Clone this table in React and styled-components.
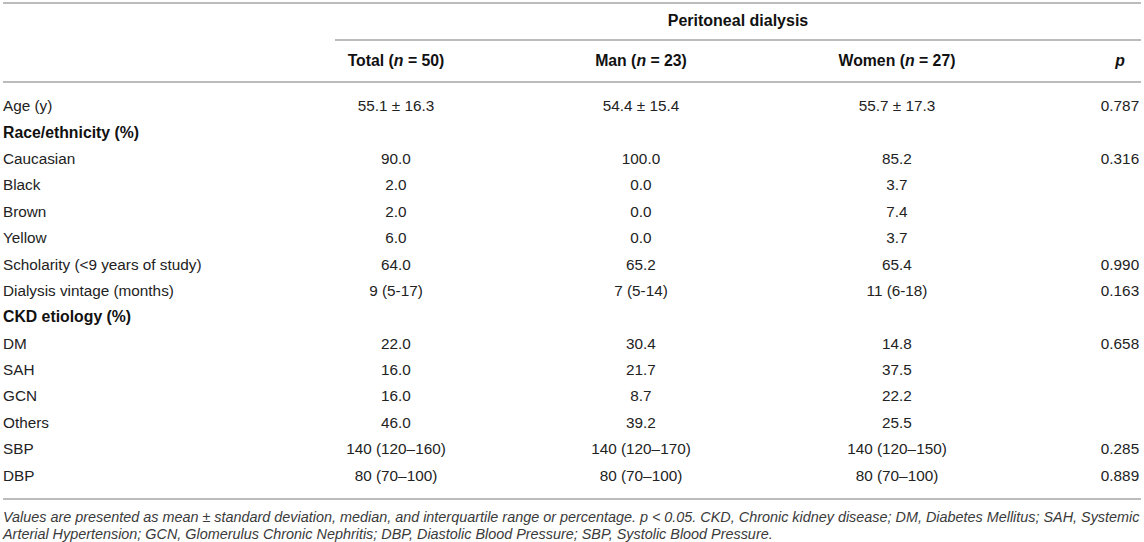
import React from "react";
import styled, { createGlobalStyle } from "styled-components";

const GlobalStyle = createGlobalStyle`
  html, body { margin: 0; padding: 0; background: #ffffff; }
  body {
    font-family: "Liberation Sans", Arial, Helvetica, sans-serif;
    color: #222222;
  }
`;

const COLS = "332px 122px 368px 144px 172px";
const RULE = "2px solid #bcbcbc";

const Page = styled.div`
  width: 1138px;
  padding: 2px 3px 0 3px;
`;

const Table = styled.div`
  border-top: ${RULE};
  border-bottom: ${RULE};
`;

const Row = styled.div`
  display: grid;
  grid-template-columns: ${COLS};
  align-items: center;
  height: ${(p) => p.$h || 26.4}px;
  border-bottom: ${(p) => (p.$rule ? RULE : "none")};
`;

const SpanCell = styled.div`
  grid-column: 2 / -1;
  height: 100%;
  display: flex;
  align-items: center;
  justify-content: center;
  border-bottom: ${RULE};
  font-weight: 700;
  font-size: 16px;
  color: #111;
`;

const Cell = styled.div`
  font-size: ${(p) => (p.$bold ? 15.8 : 15.3)}px;
  white-space: nowrap;
  text-align: ${(p) => (p.$first ? "left" : "center")};
  font-weight: ${(p) => (p.$bold ? 700 : 400)};
  color: ${(p) => (p.$bold ? "#111" : "#222")};
  ${(p) =>
    p.$p &&
    `
    justify-self: end;
    width: 42px;
  `}
`;

const Body = styled.div`
  padding: 10px 0 9px 0;
`;

const Footnote = styled.p`
  margin: 0;
  padding-top: 9px;
  font-size: 14.4px;
  line-height: 17px;
  font-style: italic;
  color: #3a3a3a;
  white-space: nowrap;
`;

const rows = [
  { label: "Age (y)", v: ["55.1 ± 16.3", "54.4 ± 15.4", "55.7 ± 17.3", "0.787"] },
  { label: "Race/ethnicity (%)", bold: true, v: ["", "", "", ""] },
  { label: "Caucasian", v: ["90.0", "100.0", "85.2", "0.316"] },
  { label: "Black", v: ["2.0", "0.0", "3.7", ""] },
  { label: "Brown", v: ["2.0", "0.0", "7.4", ""] },
  { label: "Yellow", v: ["6.0", "0.0", "3.7", ""] },
  { label: "Scholarity (<9 years of study)", v: ["64.0", "65.2", "65.4", "0.990"] },
  { label: "Dialysis vintage (months)", v: ["9 (5-17)", "7 (5-14)", "11 (6-18)", "0.163"] },
  { label: "CKD etiology (%)", bold: true, v: ["", "", "", ""] },
  { label: "DM", v: ["22.0", "30.4", "14.8", "0.658"] },
  { label: "SAH", v: ["16.0", "21.7", "37.5", ""] },
  { label: "GCN", v: ["16.0", "8.7", "22.2", ""] },
  { label: "Others", v: ["46.0", "39.2", "25.5", ""] },
  { label: "SBP", v: ["140 (120–160)", "140 (120–170)", "140 (120–150)", "0.285"] },
  { label: "DBP", v: ["80 (70–100)", "80 (70–100)", "80 (70–100)", "0.889"] },
];

export default function App() {
  return (
    <Page>
      <GlobalStyle />
      <Table>
        <Row $h={36}>
          <div />
          <SpanCell>Peritoneal dialysis</SpanCell>
        </Row>
        <Row $h={41} $rule>
          <div />
          <Cell $bold>
            Total (<i>n</i> = 50)
          </Cell>
          <Cell $bold>
            Man (<i>n</i> = 23)
          </Cell>
          <Cell $bold>
            Women (<i>n</i> = 27)
          </Cell>
          <Cell $bold $p>
            <i>p</i>
          </Cell>
        </Row>
        <Body>
          {rows.map((r) => (
            <Row key={r.label}>
              <Cell $first $bold={r.bold}>
                {r.label}
              </Cell>
              <Cell>{r.v[0]}</Cell>
              <Cell>{r.v[1]}</Cell>
              <Cell>{r.v[2]}</Cell>
              <Cell $p>{r.v[3]}</Cell>
            </Row>
          ))}
        </Body>
      </Table>
      <Footnote>
        Values are presented as mean ± standard deviation, median, and interquartile range or
        percentage. p &lt; 0.05. CKD, Chronic kidney disease; DM, Diabetes Mellitus; SAH, Systemic
        <br />
        Arterial Hypertension; GCN, Glomerulus Chronic Nephritis; DBP, Diastolic Blood Pressure;
        SBP, Systolic Blood Pressure.
      </Footnote>
    </Page>
  );
}
